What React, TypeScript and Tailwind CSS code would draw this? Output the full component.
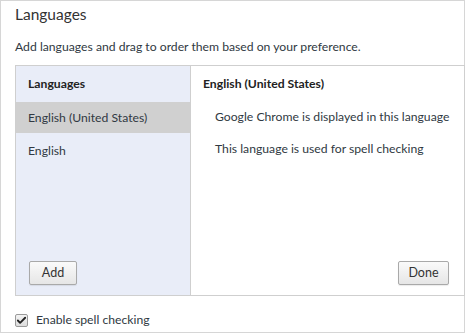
import { Check } from "lucide-react";

const font = "font-['Lato',sans-serif]";

const Btn = ({ label, className }: { label: string; className?: string }) => (
  <button
    className={`h-[24px] rounded-[2px] border border-[#a9a9a9] bg-gradient-to-b from-[#fafafa] to-[#e6e6e6] text-[12.5px] text-[#333] shadow-[0_1px_1px_rgba(0,0,0,0.08)] ${className ?? ""}`}
  >
    {label}
  </button>
);

export default function App() {
  return (
    <div className={`w-[465px] h-[334px] bg-white ${font}`}>
      <div className="w-[465px] h-[333px] border border-[#d6d6d6] flex flex-col whitespace-nowrap">
        <h1 className="pl-[14px] pt-[3px] h-[28px] text-[15.5px] text-[#333] leading-[20px]">
          Languages
        </h1>
        <p className="pl-[14px] mt-[10px] text-[12.2px] leading-[16px] text-[#303942]">
          Add languages and drag to order them based on your preference.
        </p>
        <div className="ml-[14px] mt-[10px] w-[450px] h-[231px] border border-[#cfcfcf] flex">
          <div className="w-[175px] border-r border-[#cfcfcf] bg-[#e9edf8] flex flex-col">
            <div className="h-[36px] pl-[12px] flex items-center text-[12.2px] font-bold text-[#222]">
              Languages
            </div>
            <div className="h-[31px] pl-[12px] pt-[1px] flex items-center bg-[#d0d0d0] text-[12.2px] text-[#303942]">
              English (United States)
            </div>
            <div className="h-[33px] pl-[12px] pt-[3px] flex items-center text-[12.2px] text-[#303942]">
              English
            </div>
            <div className="flex-1" />
            <div className="pl-[13px] pb-[10px]">
              <Btn label="Add" className="w-[48px]" />
            </div>
          </div>
          <div className="flex-1 flex flex-col">
            <div className="h-[36px] pl-[12px] flex items-center text-[12.2px] font-bold text-[#222]">
              English (United States)
            </div>
            <div className="h-[31px] pl-[24px] flex items-center text-[12.2px] text-[#303942]">
              Google Chrome is displayed in this language
            </div>
            <div className="h-[33px] pl-[24px] flex items-center text-[12.2px] text-[#303942]">
              This language is used for spell checking
            </div>
            <div className="flex-1" />
            <div className="flex justify-end pr-[15px] pb-[10px]">
              <Btn label="Done" className="w-[51px]" />
            </div>
          </div>
        </div>
        <label className="mt-[15px] pl-[14px] flex items-center gap-[8px] text-[12.2px] text-[#303942]">
          <span className="w-[13px] h-[13px] border border-[#9a9a9a] rounded-[2px] bg-gradient-to-b from-[#f4f4f4] to-[#dcdcdc] flex items-center justify-center">
            <Check className="w-[11px] h-[11px] text-[#222]" strokeWidth={4} />
          </span>
          Enable spell checking
        </label>
      </div>
    </div>
  );
}
